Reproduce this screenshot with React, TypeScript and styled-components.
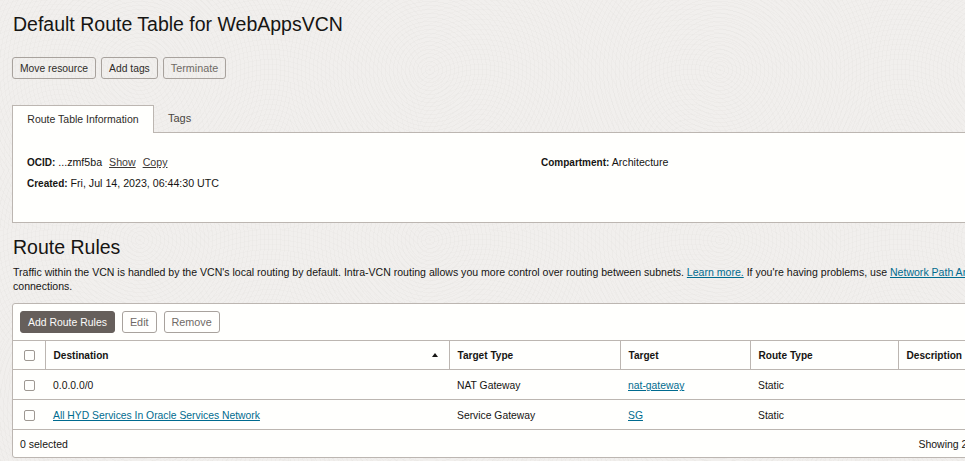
import styled, { createGlobalStyle } from 'styled-components';

const GlobalStyle = createGlobalStyle`
  html, body {
    margin: 0;
    padding: 0;
    height: 100%;
    overflow: hidden;
  }
  body {
    font-family: "Liberation Sans", Arial, sans-serif;
    font-size: 10.5px;
    color: #161513;
    background-color: #f1efed;
    background-image:
      repeating-radial-gradient(circle at 140px 70px, rgba(120, 110, 100, 0.028) 0 1px, transparent 1px 4px),
      repeating-radial-gradient(circle at 60px 150px, rgba(120, 110, 100, 0.02) 0 1px, transparent 1px 5px);
    background-size: 290px 170px, 210px 230px;
  }
`;

const Page = styled.div`
  width: 1004px;
  padding: 13px 0 0 12px;
  box-sizing: border-box;
`;

const Title = styled.h1`
  margin: 0 0 21px 1px;
  font-size: 19.5px;
  line-height: 23px;
  font-weight: 400;
`;

const Actions = styled.div`
  display: flex;
  gap: 5px;
  margin-bottom: 26px;
`;

const Button = styled.button<{ $primary?: boolean; $disabled?: boolean }>`
  height: 22px;
  padding: 0 7px;
  box-sizing: border-box;
  border-radius: 3px;
  font-family: inherit;
  font-size: ${(p) => (p.$disabled ? '10.8px' : p.$primary ? '10.45px' : '10.3px')};
  border: 1px solid ${(p) => (p.$primary ? '#665f5b' : '#a8a29d')};
  background: ${(p) => (p.$primary ? '#665f5b' : 'transparent')};
  color: ${(p) => (p.$primary ? '#fcfbfa' : p.$disabled ? '#6f6a66' : '#2e2b28')};
`;

const Tabs = styled.div`
  display: flex;
  height: 28px;
  margin-bottom: -1px;
  position: relative;
`;

const ActiveTab = styled.div`
  width: 142px;
  box-sizing: border-box;
  padding-top: 7px;
  text-align: center;
  background: #fffffd;
  border: 1px solid #bcb6b1;
  border-bottom: none;
  color: #2e2b28;
`;

const Tab = styled.div`
  padding: 7px 14px 0;
  font-size: 11px;
  color: #4a4642;
`;

const InfoPanel = styled.section`
  height: 91px;
  box-sizing: border-box;
  background: #fffffd;
  border: 1px solid #bcb6b1;
  padding: 23px 14px 0;
  display: grid;
  grid-template-columns: 514px 1fr;
  grid-auto-rows: 21px;
  align-content: start;
`;

const Field = styled.div`
  line-height: 13px;
  font-size: 10.65px;
`;

const FieldLabel = styled.b`
  font-size: 10px;
`;

const FieldLink = styled.a`
  color: #3d3936;
  text-decoration: underline;
  margin-left: 4px;
`;

const SectionTitle = styled.h2`
  margin: 13px 0 6px 1px;
  font-size: 19.5px;
  line-height: 23px;
  font-weight: 400;
`;

const Description = styled.p`
  margin: 0 0 10px 1px;
  font-size: 10.56px;
  line-height: 14px;
  white-space: nowrap;
`;

const TextLink = styled.a`
  color: #006b8f;
  text-decoration: underline;
`;

const TablePanel = styled.section`
  background: #fffffd;
  border: 1px solid #bcb6b1;
  border-radius: 3px;
`;

const Toolbar = styled.div`
  display: flex;
  gap: 7px;
  padding: 7px;
`;

const RulesTable = styled.table`
  border-collapse: collapse;
  table-layout: fixed;
  width: 100%;
  font-size: 10.35px;
`;

const HeadCell = styled.th<{ $width?: number }>`
  width: ${(p) => (p.$width ? `${p.$width}px` : 'auto')};
  height: 29px;
  padding: 0 7px 0 8px;
  box-sizing: border-box;
  text-align: left;
  font-size: 10.1px;
  font-weight: 700;
  border-top: 1px solid #bcb6b1;
  border-bottom: 1px solid #bcb6b1;
  border-left: 1px solid #bcb6b1;
  &:first-child {
    border-left: none;
  }
`;

const Cell = styled.td`
  height: 30px;
  padding: 2px 7px 0 8px;
  box-sizing: border-box;
  border-bottom: 1px solid #bcb6b1;
`;

const SortRow = styled.div`
  display: flex;
  align-items: center;
  justify-content: space-between;
`;

const SortArrow = styled.span`
  width: 0;
  height: 0;
  margin-right: 4px;
  border-left: 3px solid transparent;
  border-right: 3px solid transparent;
  border-bottom: 4px solid #161513;
`;

const Checkbox = styled.span`
  display: block;
  width: 11px;
  height: 11px;
  margin-left: 3px;
  box-sizing: border-box;
  border: 1px solid #9e9892;
  border-radius: 2px;
  background: #fffffd;
`;

const Footer = styled.div`
  display: flex;
  justify-content: space-between;
  padding: 0 7px;
  height: 27px;
  align-items: center;
`;

const rules = [
  { destination: '0.0.0.0/0', linked: false, targetType: 'NAT Gateway', target: 'nat-gateway' },
  { destination: 'All HYD Services In Oracle Services Network', linked: true, targetType: 'Service Gateway', target: 'SG' },
];

export default function App() {
  return (
    <>
      <GlobalStyle />
      <Page>
        <Title>Default Route Table for WebAppsVCN</Title>
        <Actions>
          <Button>Move resource</Button>
          <Button>Add tags</Button>
          <Button $disabled>Terminate</Button>
        </Actions>
        <Tabs>
          <ActiveTab>Route Table Information</ActiveTab>
          <Tab>Tags</Tab>
        </Tabs>
        <InfoPanel>
          <Field>
            <FieldLabel>OCID:</FieldLabel> ...zmf5ba <FieldLink>Show</FieldLink> <FieldLink>Copy</FieldLink>
          </Field>
          <Field>
            <FieldLabel>Compartment:</FieldLabel> Architecture
          </Field>
          <Field>
            <FieldLabel>Created:</FieldLabel> Fri, Jul 14, 2023, 06:44:30 UTC
          </Field>
        </InfoPanel>
        <SectionTitle>Route Rules</SectionTitle>
        <Description>
          Traffic within the VCN is handled by the VCN's local routing by default. Intra-VCN routing allows you more
          control over routing between subnets. <TextLink>Learn more.</TextLink> If you're having problems, use{' '}
          <TextLink>Network Path Analyzer</TextLink>
          <br />
          connections.
        </Description>
        <TablePanel>
          <Toolbar>
            <Button $primary>Add Route Rules</Button>
            <Button $disabled>Edit</Button>
            <Button $disabled>Remove</Button>
          </Toolbar>
          <RulesTable>
            <thead>
              <tr>
                <HeadCell $width={32}>
                  <Checkbox />
                </HeadCell>
                <HeadCell $width={404}>
                  <SortRow>
                    Destination
                    <SortArrow />
                  </SortRow>
                </HeadCell>
                <HeadCell $width={171}>Target Type</HeadCell>
                <HeadCell $width={130}>Target</HeadCell>
                <HeadCell $width={148}>Route Type</HeadCell>
                <HeadCell>Description</HeadCell>
              </tr>
            </thead>
            <tbody>
              {rules.map((rule) => (
                <tr key={rule.target}>
                  <Cell>
                    <Checkbox />
                  </Cell>
                  <Cell>{rule.linked ? <TextLink>{rule.destination}</TextLink> : rule.destination}</Cell>
                  <Cell>{rule.targetType}</Cell>
                  <Cell>
                    <TextLink>{rule.target}</TextLink>
                  </Cell>
                  <Cell>Static</Cell>
                  <Cell />
                </tr>
              ))}
            </tbody>
          </RulesTable>
          <Footer>
            <span>0 selected</span>
            <span>Showing 2 Items</span>
          </Footer>
        </TablePanel>
      </Page>
    </>
  );
}
